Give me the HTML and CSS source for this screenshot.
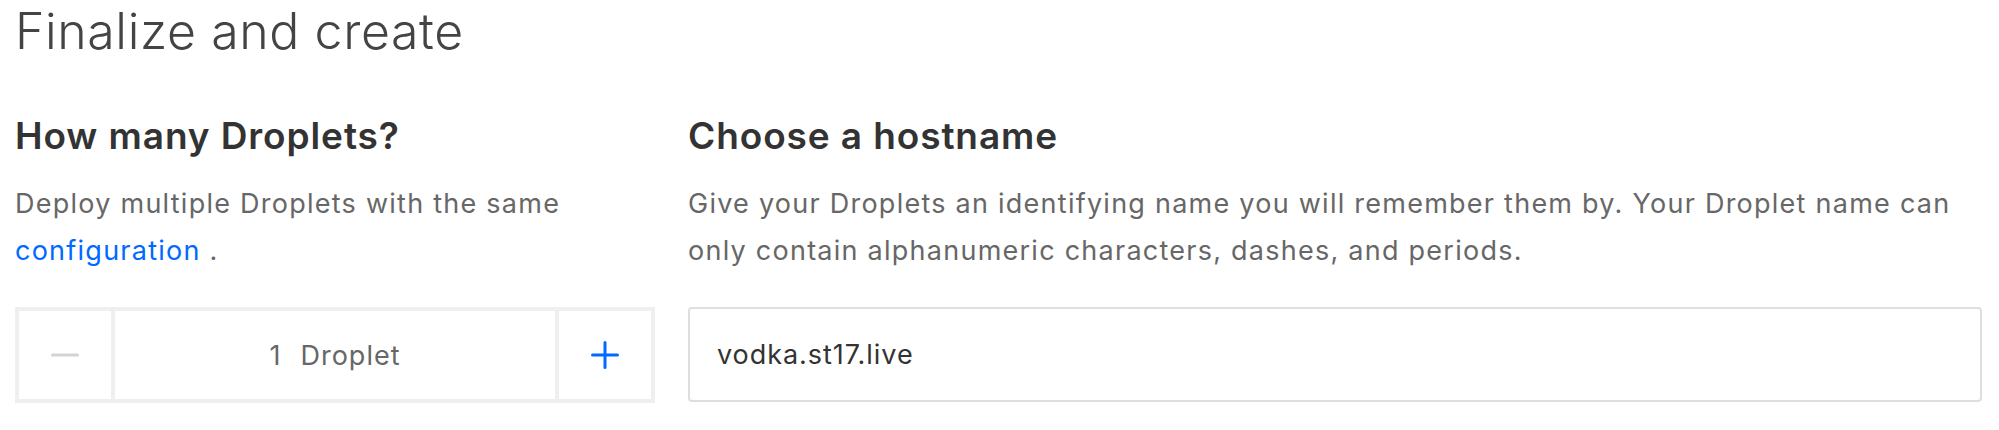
FILE: index.html
```html
<!DOCTYPE html>
<html lang="en">
<head>
<meta charset="utf-8">
<title>Finalize and create</title>
<link rel="stylesheet" href="styles.css">
</head>
<body>
<main class="page">
  <h1 class="page-title">Finalize and create</h1>
  <div class="columns">
    <section class="block">
      <h2 class="block-title">How many Droplets?</h2>
      <p class="block-desc">Deploy multiple Droplets with the same <a class="link" href="#">configuration</a> .</p>
      <div class="stepper">
        <button class="step-btn" type="button" aria-label="Decrease">
          <svg width="28" height="4" viewBox="0 0 28 4"><line x1="1.5" y1="2" x2="26.5" y2="2" stroke="#d3d3d3" stroke-width="3" stroke-linecap="round"/></svg>
        </button>
        <div class="step-value"><span class="num">1</span><span>Droplet</span></div>
        <button class="step-btn" type="button" aria-label="Increase">
          <svg width="28" height="28" viewBox="0 0 28 28"><line x1="1.5" y1="14" x2="26.5" y2="14" stroke="#0069ff" stroke-width="3" stroke-linecap="round"/><line x1="14" y1="1.5" x2="14" y2="26.5" stroke="#0069ff" stroke-width="3" stroke-linecap="round"/></svg>
        </button>
      </div>
    </section>
    <section class="block">
      <h2 class="block-title">Choose a hostname</h2>
      <p class="block-desc">Give your Droplets an identifying name you will remember them by. Your Droplet name can only contain alphanumeric characters, dashes, and periods.</p>
      <div class="text-input">vodka.st17.live</div>
    </section>
  </div>
</main>
</body>
</html>
```

FILE: styles.css
```css
* { box-sizing: border-box; }
html, body { margin: 0; padding: 0; background: #fff; }
body {
  font-family: Inter, "Open Sans", sans-serif;
  color: #333;
}
.page {
  padding: 1px 17px 0 15px;
}
.page-title {
  margin: 0;
  font-size: 50px;
  line-height: 60px;
  font-weight: 300;
  letter-spacing: 0.6px;
  color: #444;
}
.columns {
  display: grid;
  grid-template-columns: 640px 1fr;
  column-gap: 33px;
  margin-top: 52px;
}
.block-title {
  margin: 0;
  font-size: 37px;
  line-height: 46px;
  font-weight: 600;
  letter-spacing: 0.9px;
  color: #333;
}
.block-desc {
  margin: 21px 0 0;
  font-size: 27px;
  line-height: 47px;
  letter-spacing: 1.25px;
  color: #676767;
}
.link { color: #0069ff; text-decoration: none; }
.stepper {
  margin-top: 33px;
  display: grid;
  grid-template-columns: 92px 1fr 92px;
  gap: 4px;
  height: 96px;
  border: 4px solid #efefef;
  background: #efefef;
}
.step-btn {
  border: 0;
  padding: 0;
  margin: 0;
  background: #fff;
  display: flex;
  align-items: center;
  justify-content: center;
}
.step-value {
  background: #fff;
  display: flex;
  align-items: center;
  justify-content: center;
  font-size: 27px;
  letter-spacing: 1px;
  color: #676767;
}
.num { margin-right: 19px; }
.text-input {
  margin-top: 33px;
  height: 95px;
  border: 2px solid #dedede;
  border-radius: 4px;
  padding: 0 27px;
  display: flex;
  align-items: center;
  font-size: 27px;
  letter-spacing: 0.95px;
  color: #333;
}
```
